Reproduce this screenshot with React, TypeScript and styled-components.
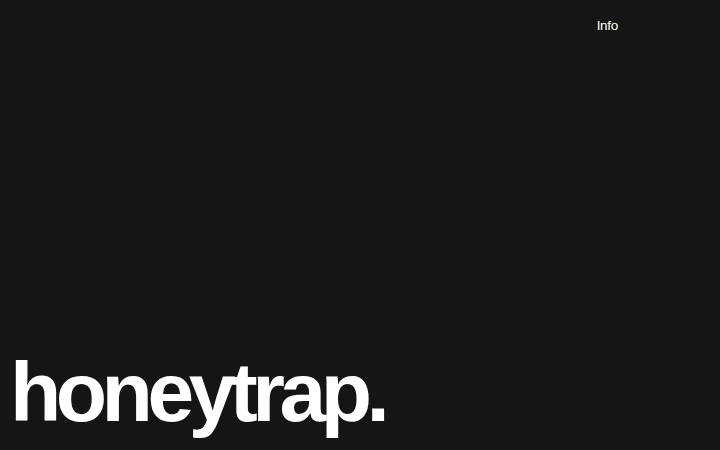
import React from "react";
import styled, { createGlobalStyle } from "styled-components";

const Global = createGlobalStyle`
  html, body { margin: 0; padding: 0; background: #151515; }
  * { box-sizing: border-box; }
`;

const Page = styled.div`
  width: 100vw;
  height: 100vh;
  background: #151515;
  color: #ffffff;
  font-family: "Liberation Sans", Arial, sans-serif;
  display: flex;
  flex-direction: column;
  justify-content: space-between;
  overflow: hidden;
`;

const Header = styled.header`
  display: flex;
  justify-content: flex-end;
  padding: 18px 102px 0 0;
`;

const NavLink = styled.a`
  color: #ffffff;
  font-size: 13.5px;
  letter-spacing: -0.3px;
  text-decoration: none;
  line-height: 16px;
`;

const Logo = styled.h1`
  margin: 0 0 0 10px;
  font-size: 84px;
  font-weight: 700;
  letter-spacing: -5.5px;
  line-height: 1;
  padding-bottom: 16px;
`;

export default function App() {
  return (
    <>
      <Global />
      <Page>
        <Header>
          <NavLink href="#">Info</NavLink>
        </Header>
        <Logo>honeytrap.</Logo>
      </Page>
    </>
  );
}
